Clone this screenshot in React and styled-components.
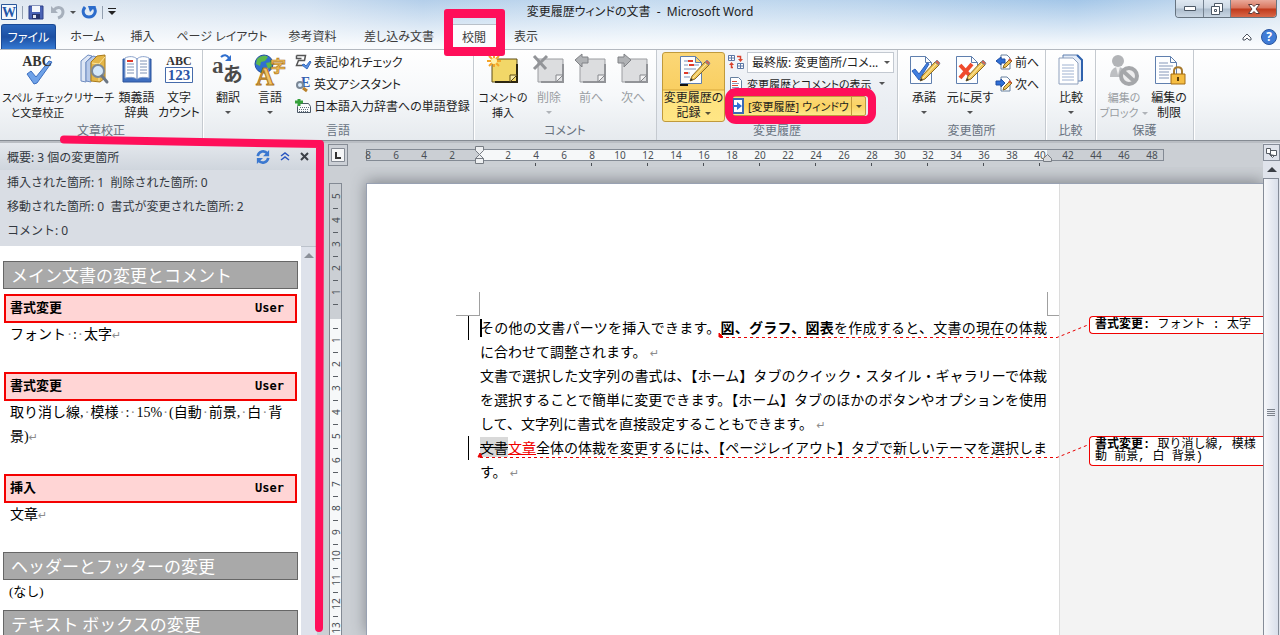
import React, { useState } from "react";
import styled, { createGlobalStyle, css } from "styled-components";

const uiFont = `"Noto Sans", "Noto Sans CJK JP", sans-serif`;
const docFont = `"Noto Sans CJK JP", sans-serif`;
const listFont = `"Liberation Serif", "Noto Sans CJK JP", sans-serif`;
const balloonFont = `"Liberation Mono", "Noto Sans CJK JP", sans-serif`;
const marker = "#ff0f5a";

const GlobalStyle = createGlobalStyle`
  * {
    box-sizing: border-box;
  }
  body {
    margin: 0;
    font-family: ${uiFont};
    font-size: 12px;
    color: #1e1e1e;
    overflow: hidden;
  }
  button, select {
    font: inherit;
    font-feature-settings: inherit;
    color: inherit;
    border: none;
    background: none;
    padding: 0;
    margin: 0;
  }
  svg {
    display: block;
    flex: none;
    overflow: visible;
  }
`;

const Window = styled.div`
  position: relative;
  display: flex;
  flex-direction: column;
  width: 100%;
  height: 100vh;
  overflow: hidden;
  font-feature-settings: "palt";
`;

const Chrome = styled.header`
  flex: none;
  background:
    linear-gradient(to bottom, rgba(255, 255, 255, 0) 0, rgba(252, 253, 254, 0.95) 46px),
    linear-gradient(to right, #dfe7f0 0%, #cfdff0 24%, #b4cfea 33%, #c5dbf0 50%, #b9d3ec 68%, #a3c6e8 84%, #d2e2f1 100%);
`;

const TitleBar = styled.div`
  display: grid;
  grid-template-columns: 1fr auto 1fr;
  height: 24px;
`;

const QuickAccess = styled.div`
  display: flex;
  align-items: center;
  gap: 5px;
  padding-left: 1px;
`;

const IconButton = styled.button`
  display: flex;
  align-items: center;
  justify-content: center;
`;

const Divider = styled.span`
  width: 1px;
  height: 13px;
  background: #93a0b0;
`;

const Title = styled.h1`
  margin: 0;
  font-size: 12px;
  font-weight: 400;
  line-height: 24px;
  white-space: pre;
`;

const WindowButtons = styled.div`
  display: flex;
  justify-self: end;
  height: 18px;
  margin-right: 3px;
  border: 1px solid #66737f;
  border-top: none;
  border-radius: 0 0 4px 4px;
  overflow: hidden;
`;

const WindowButton = styled.button`
  display: flex;
  align-items: center;
  justify-content: center;
  width: ${({ $close }) => ($close ? "46px" : "27px")};
  border-left: ${({ $first }) => ($first ? "none" : "1px solid #74818f")};
  background: ${({ $close }) =>
    $close
      ? "linear-gradient(#e9a99a 0, #d9745c 8px, #c03a1c 9px, #d9694a 17px)"
      : "linear-gradient(#dfe8f1 0, #ccd8e4 8px, #adbdcd 9px, #c9d6e3 17px)"};
`;

const TabBar = styled.nav`
  display: flex;
  align-items: flex-end;
  height: 25px;
  padding-left: 1px;
`;

const Tab = styled.button`
  position: relative;
  height: 25px;
  width: ${({ $width }) => $width}px;
  line-height: 23px;
  white-space: nowrap;
  color: #3b3b3b;
  ${({ $active }) =>
    $active &&
    css`
      background: #fbfcfe;
      border: 1px solid #b9c0c9;
      border-bottom: none;
      border-radius: 3px 3px 0 0;
      &::after {
        content: "";
        position: absolute;
        z-index: 5;
        inset: -16px -6px -7px -5px;
        border: 9px solid ${marker};
        border-radius: 3px;
      }
    `}
`;

const FileTab = styled(Tab)`
  margin-right: 3px;
  color: #fff;
  border: 1px solid #1a4a96;
  border-bottom: none;
  border-radius: 3px 3px 0 0;
  background: linear-gradient(#2a66bd, #1c4fa3 50%, #3579d3);
`;

const TabTools = styled.div`
  display: flex;
  align-items: center;
  gap: 9px;
  height: 25px;
  margin-left: auto;
  padding-right: 3px;
`;

const Ribbon = styled.div`
  flex: none;
  display: flex;
  height: 91px;
  border-top: 1px solid #b4b9c0;
  background: linear-gradient(#ffffff, #f6f8fa 50%, #e6eaee);
`;

const RibbonEdge = styled.div`
  flex: none;
  height: 3px;
  border-top: 1px solid #858b93;
  background: #b9bdc3;
`;

const Group = styled.section`
  display: flex;
  flex-direction: column;
  width: ${({ $width }) => $width}px;
  border-right: 1px solid #c5cad0;
  box-shadow: 1px 0 0 #fff;
  background: ${({ $lit }) => ($lit ? "linear-gradient(#f4f6f9, #e3e8ee)" : "none")};
`;

const GroupBody = styled.div`
  display: flex;
  height: 72px;
  padding-left: ${({ $pad }) => $pad || 3}px;
`;

const GroupLabel = styled.h2`
  margin: 0;
  font-size: 12px;
  font-weight: 400;
  line-height: 17px;
  text-align: center;
  color: #68727f;
`;

const BigButton = styled.button`
  display: flex;
  flex-direction: column;
  align-items: center;
  width: ${({ $width }) => $width}px;
  padding-top: 4px;
  font-size: ${({ $dense }) => ($dense ? 11 : 12)}px;
  line-height: 15px;
  white-space: nowrap;
  color: ${({ disabled }) => (disabled ? "#9a9ea3" : "#1e1e1e")};
  & > svg {
    margin-bottom: 4px;
  }
  ${({ $pressed }) =>
    $pressed &&
    css`
      height: 70px;
      margin-top: 2px;
      padding-top: 1px;
      border: 1px solid #c09a3c;
      border-radius: 3px;
      background: linear-gradient(#fbd777, #f9cf62 36px, #d7a63a 37px, #fde27e 38px, #ffe685);
    `}
`;

const Caret = styled.i`
  display: inline-block;
  flex: none;
  width: 0;
  height: 0;
  margin: ${({ $below, $inline }) => ($below ? "6px 0 0" : $inline ? "0 0 2px 4px" : "0")};
  border: 3px solid transparent;
  border-top-color: currentColor;
  border-bottom: none;
  opacity: 0.75;
`;

const SmallStack = styled.div`
  display: flex;
  flex-direction: column;
  padding: 1px 0 0 ${({ $pad }) => $pad || 0}px;
`;

const SmallRow = styled.div`
  display: flex;
  align-items: center;
  gap: 3px;
  height: 22px;
`;

const SmallButton = styled.button`
  display: flex;
  align-items: center;
  gap: 3px;
  height: 22px;
  font-size: ${({ $dense }) => ($dense ? 11 : 12)}px;
  white-space: nowrap;
`;

const DisplaySelect = styled.label`
  position: relative;
  & > select {
    display: block;
    width: 147px;
    height: 21px;
    padding: 0 0 0 4px;
    border: 1px solid #c3c9d1;
    background: #fff;
    appearance: none;
  }
  & > i {
    position: absolute;
    right: 4px;
    top: 9px;
  }
`;

const SplitButton = styled.div`
  position: relative;
  display: flex;
  width: 137px;
  height: 20px;
  margin-left: 1px;
  border: 1px solid #c09a3c;
  border-radius: 2px;
  background: linear-gradient(#fbd879, #fbd363 50%, #fde98c);
  &::after {
    content: "";
    position: absolute;
    z-index: 5;
    inset: -9px -11px -9px -5px;
    border: 8px solid ${marker};
    border-radius: 11px;
  }
  & > button:first-child {
    display: flex;
    flex: 1;
    align-items: center;
    gap: 2px;
    font-size: 11px;
    white-space: nowrap;
  }
  & > button:last-child {
    display: flex;
    align-items: center;
    justify-content: center;
    width: 14px;
    border-left: 1px solid #c09a3c;
  }
`;

const Workspace = styled.div`
  display: flex;
  flex: 1;
  min-height: 0;
  background: #cbcfd4;
`;

const Pane = styled.aside`
  display: flex;
  flex-direction: column;
  width: 317px;
  flex: none;
  background: #d9dde4;
  font-feature-settings: normal;
`;

const PaneHeader = styled.div`
  display: flex;
  align-items: center;
  gap: 11px;
  height: 27px;
  padding: 0 8px 0 7px;
  color: #33383f;
  background: linear-gradient(#e4e8ed, #cfd5dd);
  & > span {
    flex: 1;
  }
`;

const PaneSummary = styled.div`
  height: 76px;
  padding: 1px 0 0 7px;
  line-height: 24px;
  white-space: pre;
  color: #33383f;
`;

const PaneBody = styled.div`
  display: flex;
  flex: 1;
  min-height: 0;
`;

const ChangeList = styled.div`
  flex: 1;
  min-width: 0;
  padding: 15px 3px 0;
  overflow: hidden;
  background: #fff;
  font-family: ${listFont};
  font-size: 14px;
  color: #000;
`;

const SectionTitle = styled.h3`
  height: 28px;
  margin: 0;
  padding-left: 7px;
  border: 1px solid #666;
  background: #a9a9a9;
  color: #fff;
  font-family: ${docFont};
  font-size: 17px;
  font-weight: 400;
  line-height: 26px;
`;

const Change = styled.article`
  height: ${({ $tall }) => ($tall ? 102 : 78)}px;
  padding: 0 1px 0 1px;
`;

const ChangeHead = styled.div`
  display: flex;
  justify-content: space-between;
  height: 29px;
  padding: 0 11px 0 4px;
  border: 2px solid #f40000;
  background: #ffd5d5;
  font-size: 13px;
  font-weight: 700;
  line-height: 24px;
  & > span {
    font-family: "DejaVu Sans Mono", monospace;
    font-size: 12px;
  }
`;

const ChangeText = styled.p`
  height: 24px;
  margin: 0;
  padding-left: 6px;
  line-height: 24px;
  white-space: nowrap;
`;

const SpaceMark = styled.span`
  display: inline-block;
  width: 7px;
  text-align: center;
  color: #8c8c8c;
`;

const Changes = styled.div`
  padding-top: 5px;
`;

const Empty = styled.p`
  height: 30px;
  margin: 0;
  padding-left: 6px;
  font-size: 13px;
  line-height: 24px;
`;

const PaneScroll = styled.div`
  display: flex;
  justify-content: center;
  width: 16px;
  padding-top: 6px;
  border-top: 1px solid #bcc2cb;
  background: #dee2eb;
`;

const Editor = styled.main`
  display: grid;
  flex: 1;
  grid-template-columns: 49px 1fr 17px;
  grid-template-rows: 40px 1fr;
  min-width: 0;
  overflow: hidden;
`;

const RulerCorner = styled.div`
  padding: 1px 0 0 11px;
`;

const TabStop = styled.button`
  display: flex;
  align-items: center;
  justify-content: center;
  width: 20px;
  height: 22px;
  border: 1px solid #858b94;
  background: #ccd0d6;
`;

const HorizontalRuler = styled.div`
  position: relative;
  display: flex;
  width: 798px;
  height: 12px;
  margin-top: 6px;
  border: 1px solid #838a94;
  background: linear-gradient(to right, transparent 112px, #f6f8f9 112px, #f6f8f9 680px, transparent 680px);
`;

const RulerNumber = styled.span`
  position: relative;
  flex: none;
  width: 28px;
  margin-left: ${({ $clip }) => ($clip ? "-13px" : "0")};
  font-size: 10px;
  line-height: 10px;
  text-align: center;
  color: #4a4f55;
  ${({ $tick }) =>
    $tick &&
    css`
      &::after {
        content: "";
        position: absolute;
        left: 13px;
        top: 13px;
        width: 1px;
        height: 3px;
        background: #4a4f55;
      }
    `}
`;

const IndentMarks = styled.svg`
  position: absolute;
  left: ${({ $at }) => $at}px;
  top: -4px;
`;

const VerticalRuler = styled.div`
  width: 13px;
  height: 100%;
  margin-left: 12px;
  border: 1px solid #838a94;
  border-bottom: none;
  background: linear-gradient(transparent 135px, #f6f8f9 135px);
  overflow: hidden;
  padding-top: 6px;
`;

const VerticalMark = styled.div`
  display: flex;
  align-items: center;
  justify-content: center;
  height: 12px;
  font-size: 10px;
  line-height: 12px;
  color: #4a4f55;
  transform: rotate(-90deg);
`;

const Dash = styled.div`
  width: 5px;
  height: 1px;
  margin: 6px 3px 5px;
  background: #5b6066;
`;

const Page = styled.div`
  position: relative;
  display: flex;
  min-width: 0;
  border-left: 1px solid #98a1b2;
  border-top: 1px solid #98a1b2;
  background: #f3f3f3;
  box-shadow: 0 -2px 14px rgba(60, 64, 72, 0.5);
  clip-path: inset(-16px 0 0 -16px);
`;

const Sheet = styled.div`
  flex: none;
  width: 693px;
  padding-top: 108px;
  border-right: 1px solid #dcdcdc;
  background: #fff;
`;

const CropMarks = styled.div`
  display: flex;
  justify-content: space-between;
  height: 24px;
  padding-left: 89px;
`;

const CropMark = styled.span`
  width: ${({ $right }) => ($right ? 12 : 24)}px;
  border-bottom: 1px solid #a0a0a0;
  border-left: ${({ $right }) => ($right ? "1px solid #a0a0a0" : "none")};
  border-right: ${({ $right }) => ($right ? "none" : "1px solid #a0a0a0")};
`;

const Text = styled.div`
  width: 680px;
  padding-left: 113px;
  font-family: ${docFont};
  font-feature-settings: normal;
  font-size: 14px;
  line-height: 22px;
  color: #000;
`;

const Line = styled.p`
  position: relative;
  height: 24px;
  margin: 0;
  white-space: nowrap;
  text-align-last: ${({ $full }) => ($full ? "justify" : "start")};
  ${({ $changed }) =>
    $changed &&
    css`
      &::before {
        content: "";
        position: absolute;
        left: -12px;
        top: 0;
        width: 1px;
        height: 24px;
        background: #000;
      }
    `}
`;

const Cursor = styled.span`
  position: absolute;
  left: 0;
  top: 3px;
  width: 2px;
  height: 18px;
  background: #000;
`;

const Deleted = styled.del`
  background: #d9d9d9;
`;

const Inserted = styled.ins`
  color: #f00000;
`;

const Connectors = styled.svg`
  position: absolute;
  left: 0;
  top: 0;
`;

const Balloons = styled.div`
  flex: 1;
  min-width: 0;
  padding: 132px 0 0 29px;
  overflow: hidden;
`;

const Balloon = styled.div`
  height: ${({ $lines }) => $lines * 12 + 6}px;
  margin-bottom: 102px;
  padding: 2px 0 0 5px;
  border: 1px solid #f00000;
  border-right: none;
  border-radius: 4px 0 0 4px;
  background: #fff;
  color: #000;
  font-family: ${balloonFont};
  font-feature-settings: normal;
  font-size: 12px;
  line-height: 12px;
  white-space: pre;
`;

const ScrollTop = styled.div`
  display: flex;
  flex-direction: column;
  align-items: center;
  padding-top: 1px;
  background: #dfe3eb;
  & > button {
    display: flex;
    align-items: center;
    justify-content: center;
    width: 17px;
    height: 17px;
    margin-bottom: 6px;
    border: 1px solid #858c98;
  }
`;

const ScrollTrack = styled.div`
  padding-right: 1px;
  background: #dfe3eb;
`;

const ScrollThumb = styled.div`
  display: flex;
  align-items: center;
  justify-content: center;
  width: 16px;
  height: calc(100% + 17px);
  margin-top: -5px;
  border: 1px solid #858c98;
  background: linear-gradient(to right, #f6f7fa, #d9dfeb);
`;

const MarkerStroke = styled.svg`
  position: absolute;
  z-index: 6;
  left: 0;
  top: 0;
  pointer-events: none;
`;

const Return = styled.b`
  font-family: "DejaVu Sans", sans-serif;
  font-size: 11px;
  font-weight: 400;
  line-height: 1;
  color: #8c8c8c;
`;

/* ---------- icons ---------- */

const Big = ({ children }) => (
  <svg width="32" height="32" viewBox="0 0 32 32" fill="none" aria-hidden="true">
    {children}
  </svg>
);

const Small = ({ children, size = 16 }) => (
  <svg width={size} height={size} viewBox="0 0 16 16" fill="none" aria-hidden="true">
    {children}
  </svg>
);

const serif = { fontFamily: "Liberation Serif, serif", fontWeight: 700 };

const SpellIcon = () => (
  <Big>
    <path d="M5 20l4-3 5 6L27 7l3 1-15 21-3 1z" fill="#6fa2e8" stroke="#3c6fc0" />
    <text x="15" y="12" textAnchor="middle" fontSize="14" fill="#333" {...serif}>ABC</text>
  </Big>
);

const ResearchIcon = () => (
  <Big>
    <path d="M3 7l7-6 4 1-6 6v20l-5-1z" fill="#dfe7f5" stroke="#6f8cc0" />
    <path d="M8 8l7-6 4 1-6 6v19l-5-1z" fill="#b7c9e9" stroke="#6f8cc0" />
    <path d="M13 8l6-6 8-1v23l-5 4-9-1z" fill="#e4b648" stroke="#a87a1c" />
    <path d="M14 9l7 1 6-7M21 10v17" stroke="#fbe6a0" />
    <circle cx="20" cy="17" r="6" fill="#d4e8fb" stroke="#7a8898" strokeWidth="2" />
    <path d="M24 22l5 6" stroke="#6c7784" strokeWidth="3" strokeLinecap="round" />
  </Big>
);

const ThesaurusIcon = () => (
  <Big>
    <path d="M2 5h28v23H2z" fill="#3f6fc0" stroke="#2c559c" />
    <path d="M4 4c4-2 9-2 12 1v20c-3-2-8-2-12-1zM28 4c-4-2-9-2-12 1v20c3-2 8-2 12-1z" fill="#fff" stroke="#8ba3cc" />
    <path d="M6 10h7M6 13h7M6 16h7M6 19h7M19 7h7M19 10h7M19 13h7M19 16h7M19 19h7" stroke="#7f93b5" />
    <path d="M6 7h6" stroke="#e03a2a" strokeWidth="2" />
  </Big>
);

const CountIcon = () => (
  <Big>
    <text x="16" y="11" textAnchor="middle" fontSize="12" fill="#333" {...serif}>ABC</text>
    <path d="M2.500 13.500h27v15h-27z" fill="#fff" stroke="#456bab" />
    <text x="16" y="26" textAnchor="middle" fontSize="15" fill="#2d56a6" {...serif}>123</text>
  </Big>
);

const TranslateIcon = () => (
  <Big>
    <text x="0" y="19" fontSize="23" fill="#4a4a4a" {...serif}>a</text>
    <text x="11" y="28" fontSize="20" fontWeight="700" fontFamily="Noto Sans CJK JP" fill="#4a4a4a">あ</text>
    <path d="M9 3c3-3 6-2 8 1" stroke="#2f6fce" strokeWidth="2" />
    <path d="M19 1v6h-6z" fill="#2f6fce" />
  </Big>
);

const LanguageIcon = () => (
  <Big>
    <circle cx="10" cy="10" r="9" fill="#2f6fd0" stroke="#214f9c" />
    <path d="M3 5c4-4 9-4 11-2l-3 4-4 1-1 4-4-2zM12 9l5-1 1 4-4 3z" fill="#5cb84c" />
    <text x="16" y="18" fontSize="16" fontWeight="700" fontFamily="Noto Sans CJK JP" fill="#eebd57" stroke="#b0781c" strokeWidth=".7">字</text>
    <text x="2" y="31" fontSize="25" fill="#f2c468" stroke="#b0781c" {...serif}>A</text>
  </Big>
);

const NoteIcon = ({ kind }) => {
  const off = kind !== "new";
  return (
    <Big>
      <path d="M5 5h25v23H5z" fill={off ? "#dcdddf" : "#f2d768"} stroke={off ? "#9b9da1" : "#5d4c17"} />
      <path d="M30 10v18H8" stroke={off ? "#929498" : "#2d2611"} strokeWidth="2" />
      <path d="M23 28v-7h7z" fill={off ? "#f3f3f4" : "#f8e9a0"} stroke={off ? "#85878b" : "#5d4c17"} />
      {kind === "new" && (
        <>
          <path d="M7 0v13M0 7h14M2 2l10 10M12 2L2 12" stroke="#f5a52a" strokeWidth="2" />
          <circle cx="7" cy="7" r="3" fill="#fff2a8" />
        </>
      )}
      {kind === "delete" && <path d="M1 2l12 13M14 2L1 15" stroke="#929498" strokeWidth="3" />}
      {kind === "prev" && <path d="M0 6l7-6v3h6v6H7v4z" fill="#b0b2b5" stroke="#808286" />}
      {kind === "next" && <path d="M14 6L7 0v3H1v6h6v4z" fill="#b0b2b5" stroke="#808286" />}
    </Big>
  );
};

const Pencil = () => (
  <>
    <path d="M12 27l2-5L27 8l4 3-14 14z" fill="#f0c659" stroke="#8c6a22" />
    <path d="M15 24L28 10" stroke="#fff0b0" />
    <path d="M27 8l2-2 3 3-1 2z" fill="#d9614c" stroke="#8b8b94" />
    <path d="M12 27l1-3 2 2z" fill="#333" />
  </>
);

const Sheet32 = () => (
  <path d="M2.500 2.500h15l6 6v21h-21zM17.500 2.500v6h6" fill="#fdfeff" stroke="#5f7fae" />
);

const TrackIcon = () => (
  <Big>
    <Sheet32 />
    <path d="M6 7h9M6 11h4M15 11h6M6 15h12M6 19h6M6 23h6" stroke="#7890b8" />
    <path d="M10 7h5M11 11h5M6 19h4" stroke="#e03a2a" strokeWidth="2" />
    <Pencil />
    <path d="M2 31h8" stroke="#111" strokeWidth="2" />
  </Big>
);

const AcceptIcon = () => (
  <Big>
    <Sheet32 />
    <path d="M4 17l3-2 4 5 8-11 2 1-10 16z" fill="#3f7ee0" stroke="#2b5fb8" />
    <Pencil />
  </Big>
);

const RejectIcon = () => (
  <Big>
    <Sheet32 />
    <path d="M6 11l12 13M18 10L6 24" stroke="#ef4a2c" strokeWidth="4" />
    <Pencil />
  </Big>
);

const CompareIcon = () => (
  <Big>
    <path d="M8 1h14l5 5v21H8z" fill="#e4ecf8" stroke="#5f7fae" />
    <path d="M22 1l5 5v21" stroke="#2f62ad" strokeWidth="2" />
    <path d="M4 4h14l5 5v21H4z" fill="#fff" stroke="#8ea0bd" />
    <path d="M7 11h12M7 14h12M7 17h12M7 20h12M7 23h12M7 26h12" stroke="#9fb2d1" />
  </Big>
);

const BlockIcon = () => (
  <Big>
    <circle cx="10" cy="7" r="6" fill="#b2b4b7" />
    <path d="M2 23c0-7 4-10 8-10s8 3 8 10z" fill="#bdbfc2" />
    <path d="M8 13l2 8 2-8z" fill="#f1f1f1" />
    <circle cx="21" cy="22" r="8" fill="#ededee" stroke="#a5a7aa" strokeWidth="4" />
    <path d="M15 17l12 11" stroke="#a5a7aa" strokeWidth="4" />
  </Big>
);

const RestrictIcon = () => (
  <Big>
    <Sheet32 />
    <path d="M6 9h9M6 12h14M6 15h12M6 18h10M6 21h10M6 24h10" stroke="#8497b8" />
    <path d="M21 20v-3c0-5 8-5 8 0v3" stroke="#a77a2e" strokeWidth="2" />
    <path d="M18 20h14v10H18z" fill="#f5bd42" stroke="#a36d14" />
    <path d="M25 23v4" stroke="#5b3c08" strokeWidth="2" />
  </Big>
);

const NotationIcon = () => (
  <Small>
    <path d="M1.500 1.500h9l-1 5h-6l-2 5h7M1.500 1.500v3h5" stroke="#555" strokeWidth="1.500" />
    <path d="M7 11l2-1 2 2 4-5 1 1-4 7z" fill="#5b92e4" stroke="#356bbd" />
  </Small>
);

const EnglishIcon = () => (
  <Small>
    <text x="6" y="11" fontSize="14" fill="#355fb0" {...serif}>E</text>
    <circle cx="5" cy="9" r="3" fill="#dcecfb" stroke="#7b8896" strokeWidth="2" />
    <path d="M8 12l4 3" stroke="#b8812c" strokeWidth="3" />
  </Small>
);

const DictionaryIcon = () => (
  <Small>
    <path d="M4.500 5.500h9l2 3v6h-13v-6z" fill="#f8fafc" stroke="#4c5866" />
    <path d="M5 9.500h9M4 11.500h10M4 13.500h10" stroke="#5f6b79" strokeDasharray="1 1" />
    <path d="M4 1v7M0 4h8" stroke="#35a13b" strokeWidth="3" />
  </Small>
);

const MoveIcon = ({ next }) => (
  <Small>
    <path d="M5 1h6l3 3v11H5z" fill="#fff" stroke="#66809f" />
    <path d={next ? "M9 7L5 3v2H0v4h5v2z" : "M0 7l5-4v2h4v4H5v2z"} fill="#2f6fd6" stroke="#1f4fa5" />
    <path d="M7 14l1-3 6-6 2 2-6 6z" fill="#f0c659" stroke="#8c6a22" />
    <path d="M13 5l2 2" stroke="#d8533b" strokeWidth="2" />
  </Small>
);

const SwapIcon = () => (
  <Small>
    <path d="M.5 1.500h6v5h-6zM9.500 9.500h6v5h-6z" fill="#fff" stroke="#5b77a5" />
    <path d="M.5 4h6M3.500 1.500v5M9.500 12h6M12.500 9.500v5" stroke="#5b77a5" />
    <path d="M9 2.500h3.500V6M5 13.500H3.500V10" stroke="#d9432e" strokeWidth="1.500" />
    <path d="M10 5h5l-2.500 3zM1 11h5L3.500 8z" fill="#d9432e" />
  </Small>
);

const MarkupIcon = () => (
  <Small>
    <path d="M2.500 1.500h8l3 3v10h-11z" fill="#fff" stroke="#66809f" />
    <path d="M4 5.500h5M4 9.500h6M4 13.500h6" stroke="#df4431" />
    <path d="M4 7.500h7M4 11.500h7" stroke="#8ba0c0" />
  </Small>
);

const WindowIcon = () => (
  <Small>
    <path d="M3 1h10v14H3z" fill="#fff" stroke="#3b69b4" strokeWidth="2" />
    <path d="M3 7h4V4l5 4-5 4V9H3z" fill="#2f6fd6" />
  </Small>
);

const WordIcon = () => (
  <Small>
    <path d="M.5.500h15v15H.500z" fill="#f4f8fd" stroke="#2b579a" />
    <text x="8" y="13" textAnchor="middle" fontSize="14" fill="#2456a8" {...serif}>W</text>
  </Small>
);

const SaveIcon = () => (
  <Small>
    <path d="M1 2h14v13H1z" fill="#4a63b5" stroke="#2c3e86" />
    <path d="M4 2h8v6H4z" fill="#f4f7fb" />
    <path d="M4 10h8v5H4z" fill="#27346b" />
    <path d="M5 11h3v3H5z" fill="#e3e8f2" />
  </Small>
);

const UndoIcon = () => (
  <Small>
    <path d="M2 2v7h7z" fill="#a7b0bc" />
    <path d="M5 6c3-4 9-3 9 2 0 3-2 5-5 6" stroke="#a7b0bc" strokeWidth="3" />
  </Small>
);

const RedoIcon = () => (
  <Small>
    <path d="M4 3c-4 5-1 10 4 10s8-5 5-10" stroke="#2c6ccb" strokeWidth="3" />
    <path d="M7 2h8l-6 6z" fill="#2c6ccb" />
  </Small>
);

const RefreshIcon = () => (
  <Small size={14}>
    <path d="M2 7c1-6 8-7 11-3M14 9c-1 6-8 7-11 3" stroke="#3b78d0" strokeWidth="3" />
    <path d="M15 0v7H8zM1 16V9h7z" fill="#3b78d0" />
  </Small>
);

const UpArrow = ({ color }) => (
  <svg width="10" height="5" viewBox="0 0 10 5" aria-hidden="true">
    <path d="M5 0l5 5H0z" fill={color} />
  </svg>
);

/* ---------- content ---------- */

const tabs = [
  { name: "ホーム", width: 57 },
  { name: "挿入", width: 53 },
  { name: "ページ レイアウト", width: 106 },
  { name: "参考資料", width: 75 },
  { name: "差し込み文書", width: 98 },
  { name: "校閲", width: 52 },
  { name: "表示", width: 52 },
];

const columns = [8, 6, 4, 2, 0, ...Array.from({ length: 24 }, (_, i) => (i + 1) * 2)];
const rows = [5, 4, 3, 2, 1, "", ...Array.from({ length: 24 }, (_, i) => i + 1)];

const changes = [
  { kind: "書式変更", lines: ["フォント : 太字"] },
  { kind: "書式変更", lines: ["取り消し線, 模様 : 15% (自動 前景, 白 背", "景)"] },
  { kind: "挿入", lines: ["文章"] },
];

// spaces are shown as editing marks
const Marked = ({ text }) =>
  text.split(" ").map((word, i) => (
    <React.Fragment key={i}>
      {i > 0 && <SpaceMark>·</SpaceMark>}
      {word}
    </React.Fragment>
  ));

export default function App() {
  const [active, setActive] = useState("校閲");
  return (
    <>
      <GlobalStyle />
      <Window>
        <Chrome>
          <TitleBar>
            <QuickAccess>
              <WordIcon />
              <Divider />
              <IconButton aria-label="上書き保存"><SaveIcon /></IconButton>
              <IconButton aria-label="元に戻す"><UndoIcon /></IconButton>
              <Caret />
              <IconButton aria-label="繰り返し"><RedoIcon /></IconButton>
              <Divider />
              <IconButton aria-label="クイック アクセス ツール バーのユーザー設定">
                <svg width="8" height="8" viewBox="0 0 8 8"><path d="M0 0h8v1H0zM0 3h8L4 7z" fill="#222" /></svg>
              </IconButton>
            </QuickAccess>
            <Title>変更履歴ウィンドの文書  -  Microsoft Word</Title>
            <WindowButtons>
              <WindowButton $first aria-label="最小化">
                <svg width="12" height="5" viewBox="0 0 12 5"><path d="M.5.5h11v4H.5z" fill="#fff" stroke="#4d5966" /></svg>
              </WindowButton>
              <WindowButton aria-label="元のサイズに戻す">
                <svg width="12" height="12" viewBox="0 0 12 12" fill="#fff" stroke="#4d5966">
                  <path d="M3.500.5h8v8h-8z" />
                  <path d="M.5 3.500h8v8h-8z" />
                  <path d="M3.500 6.500h2v2h-2z" />
                </svg>
              </WindowButton>
              <WindowButton $close aria-label="閉じる">
                <svg width="12" height="10" viewBox="0 0 12 10"><path d="M.5.5h3.500l2 2 2-2h3.500L8 5l3.500 4.500H8l-2-2-2 2H.5L4 5z" fill="#fff" stroke="#5b3a3a" /></svg>
              </WindowButton>
            </WindowButtons>
          </TitleBar>
          <TabBar>
            <FileTab $width={55}>ファイル</FileTab>
            {tabs.map(({ name, width }) => (
              <Tab key={name} $width={width} $active={name === active} onClick={() => setActive(name)}>
                {name}
              </Tab>
            ))}
            <TabTools>
              <IconButton aria-label="リボンの最小化">
                <svg width="10" height="8" viewBox="0 0 10 8"><path d="M1 5l4-4 4 4v2H7L5 5 3 7H1z" fill="#fff" stroke="#4d5560" /></svg>
              </IconButton>
              <IconButton aria-label="ヘルプ">
                <svg width="16" height="16" viewBox="0 0 16 16">
                  <circle cx="8" cy="8" r="7.500" fill="#3f7bd6" stroke="#2a56a0" />
                  <text x="8" y="12" textAnchor="middle" fontSize="12" fontWeight="700" fontFamily="Noto Sans" fill="#fff">?</text>
                </svg>
              </IconButton>
            </TabTools>
          </TabBar>
        </Chrome>

        <Ribbon>
          <Group $width={203}>
            <GroupBody $pad={2}>
              <BigButton $width={71} $dense><SpellIcon />スペル チェック<br /><span>と文章校正</span></BigButton>
              <BigButton $width={42} $dense><ResearchIcon />リサーチ</BigButton>
              <BigButton $width={43}><ThesaurusIcon />類義語<br /><span>辞典</span></BigButton>
              <BigButton $width={42}><CountIcon />文字<br /><span>カウント</span></BigButton>
            </GroupBody>
            <GroupLabel>文章校正</GroupLabel>
          </Group>

          <Group $width={271}>
            <GroupBody $pad={4}>
              <BigButton $width={42}><TranslateIcon />翻訳<Caret $below /></BigButton>
              <BigButton $width={42}><LanguageIcon />言語<Caret $below /></BigButton>
              <SmallStack $pad={4}>
                <SmallButton><NotationIcon />表記ゆれチェック</SmallButton>
                <SmallButton><EnglishIcon />英文アシスタント</SmallButton>
                <SmallButton><DictionaryIcon />日本語入力辞書への単語登録</SmallButton>
              </SmallStack>
            </GroupBody>
            <GroupLabel>言語</GroupLabel>
          </Group>

          <Group $width={183}>
            <GroupBody $pad={4}>
              <BigButton $width={50} $dense><NoteIcon kind="new" />コメントの<br /><span>挿入</span></BigButton>
              <BigButton $width={42} disabled><NoteIcon kind="delete" />削除<Caret $below /></BigButton>
              <BigButton $width={42} disabled><NoteIcon kind="prev" />前へ</BigButton>
              <BigButton $width={42} disabled><NoteIcon kind="next" />次へ</BigButton>
            </GroupBody>
            <GroupLabel>コメント</GroupLabel>
          </Group>

          <Group $width={241} $lit>
            <GroupBody $pad={5}>
              <BigButton $width={63} $pressed aria-pressed="true">
                <TrackIcon />変更履歴の
                <span>記録<Caret $inline /></span>
              </BigButton>
              <SmallStack $pad={3}>
                <SmallRow>
                  <SwapIcon />
                  <DisplaySelect>
                    <select aria-label="変更内容の表示" defaultValue="final">
                      <option value="final">最終版: 変更箇所/コメ...</option>
                    </select>
                    <Caret />
                  </DisplaySelect>
                </SmallRow>
                <SmallButton $dense><MarkupIcon />変更履歴とコメントの表示<Caret $inline /></SmallButton>
                <SmallRow>
                  <SplitButton>
                    <button><WindowIcon />[変更履歴] ウィンドウ</button>
                    <button aria-label="ウィンドウの種類"><Caret /></button>
                  </SplitButton>
                </SmallRow>
              </SmallStack>
            </GroupBody>
            <GroupLabel>変更履歴</GroupLabel>
          </Group>

          <Group $width={148}>
            <GroupBody>
              <BigButton $width={46}><AcceptIcon />承諾<Caret $below /></BigButton>
              <BigButton $width={46}><RejectIcon />元に戻す<Caret $below /></BigButton>
              <SmallStack $pad={3}>
                <SmallButton><MoveIcon />前へ</SmallButton>
                <SmallButton><MoveIcon next />次へ</SmallButton>
              </SmallStack>
            </GroupBody>
            <GroupLabel>変更箇所</GroupLabel>
          </Group>

          <Group $width={50}>
            <GroupBody>
              <BigButton $width={44}><CompareIcon />比較<Caret $below /></BigButton>
            </GroupBody>
            <GroupLabel>比較</GroupLabel>
          </Group>

          <Group $width={98}>
            <GroupBody>
              <BigButton $width={50} $dense disabled><BlockIcon />編集の<br /><span>ブロック<Caret $inline /></span></BigButton>
              <BigButton $width={40}><RestrictIcon />編集の<br /><span>制限</span></BigButton>
            </GroupBody>
            <GroupLabel>保護</GroupLabel>
          </Group>
        </Ribbon>
        <RibbonEdge />

        <Workspace>
          <Pane>
            <PaneHeader>
              <span>概要: 3 個の変更箇所</span>
              <IconButton aria-label="更新"><RefreshIcon /></IconButton>
              <IconButton aria-label="折りたたむ">
                <svg width="8" height="9" viewBox="0 0 8 9" fill="none" stroke="#2a56c0" strokeWidth="1.500"><path d="M0 4l4-3 4 3M0 8l4-3 4 3" /></svg>
              </IconButton>
              <IconButton aria-label="閉じる">
                <svg width="9" height="9" viewBox="0 0 9 9" stroke="#3c4148" strokeWidth="2"><path d="M1 1l7 7M8 1L1 8" /></svg>
              </IconButton>
            </PaneHeader>
            <PaneSummary>
              {"挿入された箇所: 1  削除された箇所: 0\n移動された箇所: 0  書式が変更された箇所: 2\nコメント: 0"}
            </PaneSummary>
            <PaneBody>
              <ChangeList>
                <SectionTitle>メイン文書の変更とコメント</SectionTitle>
                <Changes>
                  {changes.map(({ kind, lines }, i) => (
                    <Change key={i} $tall={lines.length > 1}>
                      <ChangeHead>{kind}<span>User</span></ChangeHead>
                      {lines.map((line, n) => (
                        <ChangeText key={n}>
                          <Marked text={line} />
                          {n === lines.length - 1 && <Return>↵</Return>}
                        </ChangeText>
                      ))}
                    </Change>
                  ))}
                </Changes>
                <SectionTitle>ヘッダーとフッターの変更</SectionTitle>
                <Empty>(なし)</Empty>
                <SectionTitle>テキスト ボックスの変更</SectionTitle>
              </ChangeList>
              <PaneScroll><UpArrow color="#8b9099" /></PaneScroll>
            </PaneBody>
          </Pane>

          <Editor>
            <RulerCorner>
              <TabStop aria-label="タブの種類">
                <svg width="14" height="14" viewBox="0 0 14 14"><path d="M.5.5h13v13H.5z" fill="#f6f7f8" stroke="#858b94" /><path d="M5 4v6h5" fill="none" stroke="#333" strokeWidth="2" /></svg>
              </TabStop>
            </RulerCorner>
            <div>
              <HorizontalRuler>
                {columns.map((n, i) => (
                  <RulerNumber key={i} $clip={i === 0} $tick={i > 4 && n <= 40 && n % 4 === 0}>
                    {n || ""}
                  </RulerNumber>
                ))}
                <IndentMarks $at={108} width="10" height="19" viewBox="0 0 10 19">
                  <path d="M.5.500h8v4l-4 4-4-4zM4.500 8.500l4 4h-8zM.5 12.500h8v5h-8z" fill="#eef0f2" stroke="#777c83" />
                </IndentMarks>
                <IndentMarks $at={676} width="10" height="19" viewBox="0 0 10 19">
                  <path d="M4.500 8.500l4 4v3h-8v-3z" fill="#d9dbde" stroke="#777c83" />
                </IndentMarks>
              </HorizontalRuler>
            </div>
            <ScrollTop>
              <button aria-label="ルーラー">
                <svg width="13" height="12" viewBox="0 0 13 12" fill="#fff" stroke="#555b63"><path d="M5.500 3.500h6v5h-6zM1.500 1.500h4v5h-4zM4.500 7.500l3 3 2-2z" /></svg>
              </button>
              <UpArrow color="#3a3e45" />
            </ScrollTop>

            <VerticalRuler>
              {rows.map((n, i) => (
                <React.Fragment key={i}>
                  <VerticalMark>{n}</VerticalMark>
                  <Dash />
                </React.Fragment>
              ))}
            </VerticalRuler>

            <Page>
              <Sheet>
                <CropMarks>
                  <CropMark />
                  <CropMark $right />
                </CropMarks>
                <Text>
                  <Line $full $changed>
                    <Cursor />
                    その他の文書パーツを挿入できます。<strong>図、グラフ、図表</strong>を作成すると、文書の現在の体裁
                  </Line>
                  <Line>に合わせて調整されます。<Return> ↵</Return></Line>
                  <Line $full>文書で選択した文字列の書式は、【ホーム】タブのクイック・スタイル・ギャラリーで体裁</Line>
                  <Line $full>を選択することで簡単に変更できます。【ホーム】タブのほかのボタンやオプションを使用</Line>
                  <Line>して、文字列に書式を直接設定することもできます。<Return> ↵</Return></Line>
                  <Line $full $changed>
                    <Deleted>文書</Deleted><Inserted>文章</Inserted>全体の体裁を変更するには、【ページレイアウト】タブで新しいテーマを選択しま
                  </Line>
                  <Line>す。<Return> ↵</Return></Line>
                </Text>
              </Sheet>
              <Balloons>
                <Balloon $lines={1}><strong>書式変更:</strong> フォント : 太字</Balloon>
                <Balloon $lines={2}><strong>書式変更:</strong>{" 取り消し線, 模様\n動 前景, 白 背景)"}</Balloon>
              </Balloons>
              <Connectors width="730" height="300" viewBox="0 0 730 300" fill="none" stroke="#e80000" strokeDasharray="3 3">
                <path d="M353 153.500H690L722 140.500" />
                <path d="M113 273.500H690L722 260.500" />
                <path d="M352 153v-4l4 4zM111 273l2-4 2 4z" fill="#f00000" strokeDasharray="none" />
              </Connectors>
            </Page>

            <ScrollTrack>
              <ScrollThumb>
                <svg width="8" height="8" viewBox="0 0 8 8" stroke="#7c828c"><path d="M0 .5h8M0 2.500h8M0 4.500h8M0 6.500h8" /></svg>
              </ScrollThumb>
            </ScrollTrack>
          </Editor>
        </Workspace>

        <MarkerStroke width="330" height="640" viewBox="0 0 330 640" fill="none" stroke={marker} strokeWidth="8" strokeLinecap="round" strokeLinejoin="round">
          <path d="M64 139.500L200 142l120 2-1 484" />
        </MarkerStroke>
      </Window>
    </>
  );
}
